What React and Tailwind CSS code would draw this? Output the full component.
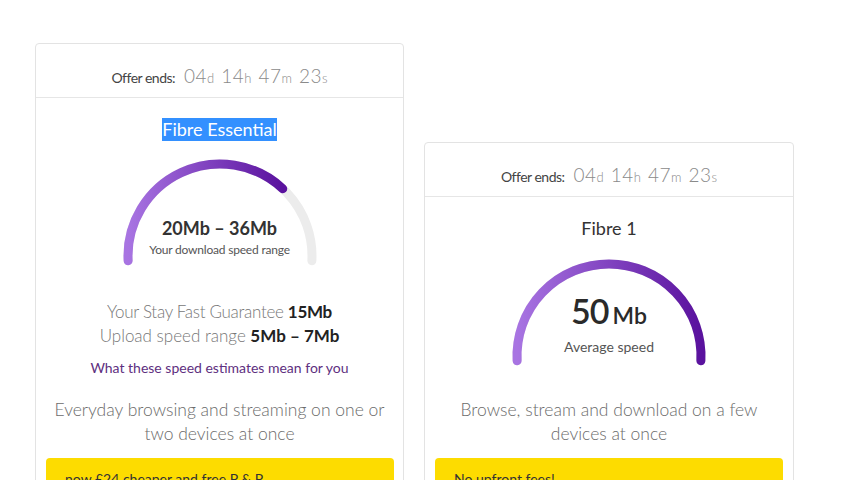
import React from "react";

const FONT = { fontFamily: "Lato, 'Open Sans', sans-serif" };

function pt(cx, cy, r, deg) {
  const a = (deg * Math.PI) / 180;
  return [cx + r * Math.cos(a), cy - r * Math.sin(a)];
}

function arc(cx, cy, r, from, to) {
  const [x1, y1] = pt(cx, cy, r, from);
  const [x2, y2] = pt(cx, cy, r, to);
  const large = from - to > 180 ? 1 : 0;
  return `M ${x1.toFixed(2)} ${y1.toFixed(2)} A ${r} ${r} 0 ${large} 1 ${x2.toFixed(2)} ${y2.toFixed(2)}`;
}

function Gauge({ id, fillTo, children }) {
  const cx = 100, cy = 98, r = 92;
  const [ex] = pt(cx, cy, r, fillTo);
  return (
    <div className="relative mx-auto w-[200px] h-[110px]">
      <svg width="200" height="110" viewBox="0 0 200 110" className="absolute left-0 top-0">
        <defs>
          <linearGradient id={id} gradientUnits="userSpaceOnUse" x1="8" y1="0" x2={ex} y2="0">
            <stop offset="0" stopColor="#a874e2" />
            <stop offset="1" stopColor="#5a129e" />
          </linearGradient>
        </defs>
        <path d={arc(cx, cy, r, 183, -3)} fill="none" stroke="#ececec" strokeWidth="9" strokeLinecap="round" />
        <path d={arc(cx, cy, r, 183, fillTo)} fill="none" stroke={`url(#${id})`} strokeWidth="9" strokeLinecap="round" />
      </svg>
      <div className="absolute inset-0 flex flex-col items-center">{children}</div>
    </div>
  );
}

function Header() {
  return (
    <div className="h-[54px] border-b border-[#e6e6e6] flex justify-center pt-[20px]">
      <div className="flex items-baseline leading-[24px]">
        <span className="text-[14px] text-[#444] tracking-[-0.5px] mr-[9px]">Offer ends:</span>
        <span className="text-[19px] font-light text-[#8a8a8a] tracking-[0.5px]">04</span>
        <span className="text-[13px] font-light text-[#8a8a8a] mr-[7px]">d</span>
        <span className="text-[19px] font-light text-[#8a8a8a] tracking-[0.5px]">14</span>
        <span className="text-[13px] font-light text-[#8a8a8a] mr-[7px]">h</span>
        <span className="text-[19px] font-light text-[#8a8a8a] tracking-[0.5px]">47</span>
        <span className="text-[13px] font-light text-[#8a8a8a] mr-[7px]">m</span>
        <span className="text-[19px] font-light text-[#8a8a8a] tracking-[0.5px]">23</span>
        <span className="text-[13px] font-light text-[#8a8a8a]">s</span>
      </div>
    </div>
  );
}

export default function App() {
  return (
    <div className="w-[853px] h-[480px] overflow-hidden bg-white" style={FONT}>
      <div className="flex items-start gap-[20px] pl-[35px] pt-[43px]">
        {/* Card 1 */}
        <div className="w-[369px] h-[500px] border border-[#e3e3e3] rounded-[4px] bg-white">
          <Header />
          <div className="flex flex-col items-center text-center">
            <div className="mt-[20px] leading-[23px] text-[18px] text-white bg-[#3390ff]">Fibre Essential</div>
            <div className="mt-[17px]">
              <Gauge id="g1" fillTo={47}>
                <div className="mt-[56px] text-[18px] leading-[28px] font-bold text-[#333]">20Mb – 36Mb</div>
                <div className="text-[12px] leading-[16px] text-[#555] tracking-[-0.2px]">Your download speed range</div>
              </Gauge>
            </div>
            <div className="mt-[32px] text-[17px] leading-[24px] font-light text-[#777] tracking-[-0.3px]">
              Your Stay Fast Guarantee <span className="font-bold text-[#222]">15Mb</span>
            </div>
            <div className="text-[17px] leading-[24px] font-light text-[#777]">
              Upload speed range <span className="font-bold text-[#222]">5Mb – 7Mb</span>
            </div>
            <div className="mt-[10px] text-[14px] leading-[20px] text-[#5e2f80]">What these speed estimates mean for you</div>
            <div className="mt-[20px] px-[18px] text-[17.5px] leading-[24px] font-light text-[#6b6b6b]">
              Everyday browsing and streaming on one or two devices at once
            </div>
            <div className="mt-[12px] self-stretch ml-[10px] mr-[9px] rounded-[4px] bg-[#fddc00] pl-[19px] pt-[11px] pb-4 text-left text-[14px] leading-[20px] text-[#333]">
              now £24 cheaper and free P &amp; P
            </div>
          </div>
        </div>

        {/* Card 2 */}
        <div className="w-[370px] h-[400px] mt-[99px] border border-[#e3e3e3] rounded-[4px] bg-white">
          <Header />
          <div className="flex flex-col items-center text-center">
            <div className="mt-[19px] leading-[24px] text-[18px] text-[#333]">Fibre 1</div>
            <div className="mt-[18px]">
              <Gauge id="g2" fillTo={-3}>
                <div className="mt-[33px] flex items-baseline text-[#2a2a2a] leading-[40px]">
                  <span className="text-[34px] font-semibold tracking-[-1px]">50</span>
                  <span className="text-[23px] font-semibold ml-[4px]">Mb</span>
                </div>
                <div className="mt-[3px] text-[14px] leading-[18px] text-[#555]">Average speed</div>
              </Gauge>
            </div>
            <div className="mt-[30px] px-[30px] text-[17.5px] leading-[24px] font-light text-[#6b6b6b]">
              Browse, stream and download on a few devices at once
            </div>
            <div className="mt-[12px] self-stretch ml-[10px] mr-[10px] rounded-[4px] bg-[#fddc00] pl-[19px] pt-[11px] pb-4 text-left text-[14px] leading-[20px] text-[#333]">
              No upfront fees!
            </div>
          </div>
        </div>
      </div>
    </div>
  );
}
